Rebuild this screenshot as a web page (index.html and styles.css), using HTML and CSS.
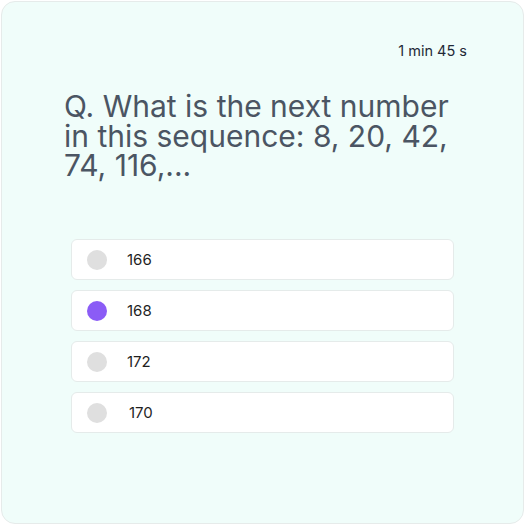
FILE: index.html
```html
<!DOCTYPE html>
<html lang="en">
<head>
<meta charset="utf-8">
<title>Quiz</title>
<link rel="stylesheet" href="styles.css">
</head>
<body>
<div class="card">
  <div class="timer">1 min 45 s</div>
  <h1 class="question">Q. What is the next number in this sequence: 8, 20, 42, 74, 116,...</h1>
  <ul class="options">
    <li class="option"><span class="radio"></span><span class="label">166</span></li>
    <li class="option"><span class="radio radio--selected"></span><span class="label">168</span></li>
    <li class="option"><span class="radio"></span><span class="label">172</span></li>
    <li class="option"><span class="radio"></span><span class="label label--shift">170</span></li>
  </ul>
</div>
</body>
</html>
```
FILE: styles.css
```css
html, body {
  margin: 0;
  padding: 0;
  background: #ffffff;
}
body {
  padding: 1px;
  font-family: Inter, "Noto Sans", sans-serif;
}
.card {
  box-sizing: border-box;
  width: 523px;
  height: 523px;
  border: 1px solid #e6ebea;
  border-radius: 14px;
  background: #f0fdfa;
  overflow: hidden;
}
.timer {
  text-align: right;
  font-size: 14.5px;
  line-height: 17px;
  color: #1f2937;
  padding: 40px 56px 0 0;
}
.question {
  margin: 33px 0 0 62px;
  width: 400px;
  font-size: 30px;
  line-height: 29.5px;
  font-weight: 400;
  color: #4b5563;
}
.options {
  list-style: none;
  margin: 58.5px 0 0 69px;
  padding: 0;
  width: 383px;
  display: flex;
  flex-direction: column;
  gap: 10px;
}
.option {
  box-sizing: border-box;
  height: 41px;
  border: 1px solid #e5ebea;
  border-radius: 6px;
  background: #ffffff;
  display: flex;
  align-items: center;
  padding-left: 15px;
}
.radio {
  width: 20px;
  height: 20px;
  border-radius: 50%;
  background: #dfdfdf;
  flex: none;
}
.radio--selected {
  background: #8b5cf6;
}
.label {
  margin-left: 20px;
  font-size: 15px;
  color: #1f1f1f;
}
.label--shift {
  margin-left: 22px;
}
```
